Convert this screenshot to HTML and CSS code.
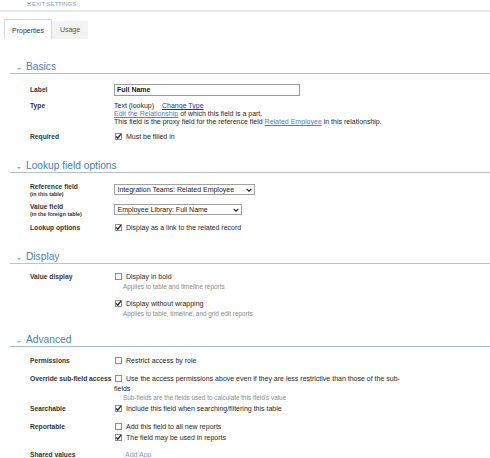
FILE: index.html
```html
<!DOCTYPE html>
<html>
<head>
<meta charset="utf-8">
<link rel="stylesheet" href="styles.css">
</head>
<body>
<div class="topbar">
  <a class="exit"><svg class="exit-x" width="4" height="4" viewBox="0 0 4 4"><path d="M0.5 0.5L3.5 3.5M3.5 0.5L0.5 3.5" stroke="#7c9ccf" stroke-width="1.1"/></svg>EXIT SETTINGS</a>
</div>
<div class="tabs">
  <div class="tab active">Properties</div>
  <div class="tab">Usage</div>
</div>

<section class="sec">
  <h2 class="sec-head"><span class="tri"></span>Basics</h2>
  <div class="row r-label">
    <div class="lbl lbl-input">Label</div>
    <div class="val"><div class="input">Full Name</div></div>
  </div>
  <div class="row r-type">
    <div class="lbl">Type</div>
    <div class="val">
      <div>Text (lookup) <a class="link-dark">Change Type</a></div>
      <div><a class="link">Edit the Relationship</a> of which this field is a part.</div>
      <div>This field is the proxy field for the reference field <a class="link">Related Employee</a> in this relationship.</div>
    </div>
  </div>
  <div class="row r-required">
    <div class="lbl">Required</div>
    <div class="val"><span class="cb on"><svg viewBox="0 0 7 7" width="7" height="7"><path d="M1.2 3.4L2.8 5.2L5.9 1.2" fill="none" stroke="#222" stroke-width="1.3"/></svg></span>Must be filled in</div>
  </div>
</section>

<section class="sec">
  <h2 class="sec-head h-lookup"><span class="tri"></span>Lookup field options</h2>
  <div class="row r-ref">
    <div class="lbl">Reference field<span class="lbl-sub">(in this table)</span></div>
    <div class="val"><div class="select sel-ref"><span>Integration Teams: Related Employee</span><svg class="chev" width="6" height="4" viewBox="0 0 6 4"><path d="M0.6 0.8L3 3.2L5.4 0.8" fill="none" stroke="#222" stroke-width="1.2"/></svg></div></div>
  </div>
  <div class="row r-valfield">
    <div class="lbl">Value field<span class="lbl-sub">(in the foreign table)</span></div>
    <div class="val"><div class="select sel-val"><span>Employee Library: Full Name</span><svg class="chev" width="6" height="4" viewBox="0 0 6 4"><path d="M0.6 0.8L3 3.2L5.4 0.8" fill="none" stroke="#222" stroke-width="1.2"/></svg></div></div>
  </div>
  <div class="row r-lookopt">
    <div class="lbl">Lookup options</div>
    <div class="val"><span class="cb on"><svg viewBox="0 0 7 7" width="7" height="7"><path d="M1.2 3.4L2.8 5.2L5.9 1.2" fill="none" stroke="#222" stroke-width="1.3"/></svg></span>Display as a link to the related record</div>
  </div>
</section>

<section class="sec">
  <h2 class="sec-head h-display"><span class="tri"></span>Display</h2>
  <div class="row r-bold">
    <div class="lbl">Value display</div>
    <div class="val">
      <div><span class="cb"></span>Display in bold</div>
      <div class="sub">Applies to table and timeline reports</div>
    </div>
  </div>
  <div class="row r-wrap">
    <div class="lbl"></div>
    <div class="val">
      <div><span class="cb on"><svg viewBox="0 0 7 7" width="7" height="7"><path d="M1.2 3.4L2.8 5.2L5.9 1.2" fill="none" stroke="#222" stroke-width="1.3"/></svg></span>Display without wrapping</div>
      <div class="sub">Applies to table, timeline, and grid edit reports</div>
    </div>
  </div>
</section>

<section class="sec">
  <h2 class="sec-head h-advanced"><span class="tri"></span>Advanced</h2>
  <div class="row r-perm">
    <div class="lbl">Permissions</div>
    <div class="val"><span class="cb"></span>Restrict access by role</div>
  </div>
  <div class="row r-override">
    <div class="lbl">Override sub-field access</div>
    <div class="val">
      <div class="wraptext"><span class="cb"></span>Use the access permissions above even if they are less restrictive than those of the sub-<br>fields</div>
      <div class="sub sub-tight">Sub-fields are the fields used to calculate this field's value</div>
    </div>
  </div>
  <div class="row r-search">
    <div class="lbl">Searchable</div>
    <div class="val"><span class="cb on"><svg viewBox="0 0 7 7" width="7" height="7"><path d="M1.2 3.4L2.8 5.2L5.9 1.2" fill="none" stroke="#222" stroke-width="1.3"/></svg></span>Include this field when searching/filtering this table</div>
  </div>
  <div class="row r-report">
    <div class="lbl">Reportable</div>
    <div class="val">
      <div><span class="cb"></span>Add this field to all new reports</div>
      <div class="second"><span class="cb on"><svg viewBox="0 0 7 7" width="7" height="7"><path d="M1.2 3.4L2.8 5.2L5.9 1.2" fill="none" stroke="#222" stroke-width="1.3"/></svg></span>The field may be used in reports</div>
    </div>
  </div>
  <div class="row r-shared">
    <div class="lbl">Shared values</div>
    <div class="val"><a class="addapp">Add App</a></div>
  </div>
</section>
</body>
</html>
```

FILE: styles.css
```css
* { box-sizing: border-box; }
html, body { margin: 0; padding: 0; background: #fff; }
body {
  font-family: "Liberation Sans", Arial, sans-serif;
  font-size: 7px;
  line-height: 8px;
  color: #262626;
  width: 490px;
  height: 458px;
  overflow: hidden;
}

.topbar {
  height: 12px;
  border-bottom: 2px solid #e8e8e8;
  padding-left: 27px;
}
.exit {
  display: inline-flex;
  align-items: center;
  gap: 1px;
  font-size: 5.9px;
  line-height: 6px;
  color: #7c9ccf;
}
.exit-x { display: block; }

.tabs {
  display: flex;
  align-items: flex-end;
  margin-top: 7px;
  padding-left: 4px;
  height: 20px;
}
.tab {
  height: 18px;
  line-height: 18px;
  padding: 0 8px;
  background: #f3f3f3;
  color: #555;
}
.tab.active {
  height: 20px;
  line-height: 21px;
  padding: 0 7px;
  background: #fff;
  border: 1px solid #d6d6d6;
  border-bottom: none;
  color: #333;
}

.sec { margin-left: 10px; }
.sec-head {
  display: flex;
  align-items: center;
  margin: 22px 0 0 0;
  height: 13px;
  line-height: 12px;
  font-size: 10.2px;
  font-weight: normal;
  color: #4a7cb5;
  border-bottom: 1px solid #aebfd1;
}
.h-lookup { margin-top: 19px; border-bottom-color: #b5bec7; }
.h-display { margin-top: 19px; border-bottom-color: #bcc4cc; }
.h-advanced { margin-top: 17px; border-bottom-color: #a9b9cf; }
.tri {
  width: 0;
  height: 0;
  margin: 4px 5px 0 7px;
  border-left: 2.5px solid transparent;
  border-right: 2.5px solid transparent;
  border-top: 2.5px solid #93acc9;
}

.row {
  display: grid;
  grid-template-columns: 84px 1fr;
  padding-left: 20px;
}
.lbl {
  font-weight: bold;
  font-size: 6.7px;
  color: #333;
  white-space: nowrap;
}
.lbl-input { margin-top: 2px; }
.lbl-sub {
  display: block;
  font-size: 5.4px;
  line-height: 6px;
}
.val { white-space: nowrap; }

.r-label { margin-top: 10px; }
.r-type { margin-top: 6px; }
.r-required { margin-top: 7px; }
.r-ref { margin-top: 10px; }
.r-valfield { margin-top: 6px; }
.r-lookopt { margin-top: 7px; }
.r-bold { margin-top: 9px; }
.r-wrap { margin-top: 10px; }
.r-perm { margin-top: 10px; }
.r-override { margin-top: 9px; line-height: 10px; }
.r-search { margin-top: 4px; }
.r-report { margin-top: 10px; }
.r-shared { margin-top: 9px; }
.second { margin-top: 3px; }

.input {
  width: 186px;
  height: 12px;
  border: 1px solid #9a9a9a;
  padding-left: 2px;
  font-weight: bold;
  line-height: 10px;
  color: #222;
}

.select {
  display: flex;
  align-items: center;
  justify-content: space-between;
  height: 11px;
  margin-top: 1px;
  padding: 0 2px 0 2.5px;
  border: 1px solid #a2a2a2;
  line-height: 9px;
  color: #222;
}
.sel-ref { width: 141px; }
.sel-val { width: 128px; }
.chev { display: block; }

.cb {
  display: inline-block;
  width: 7px;
  height: 7px;
  margin: 0 4px 0 1px;
  border: 1px solid #8c8c8c;
  background: #fff;
  vertical-align: -1px;
  position: relative;
}
.cb svg {
  position: absolute;
  left: -1px;
  top: -1px;
}

.sub {
  margin-top: 2px;
  padding-left: 9px;
  font-size: 6.4px;
  line-height: 7px;
  color: #8a8a8a;
}
.sub-tight { margin-top: 0; }

.link-dark {
  margin-left: 6px;
  color: #2a2fa0;
  text-decoration: underline;
}
.link {
  color: #4d7fc2;
  text-decoration: underline;
}
.addapp {
  padding-left: 11px;
  color: #7c9ccf;
}
```
